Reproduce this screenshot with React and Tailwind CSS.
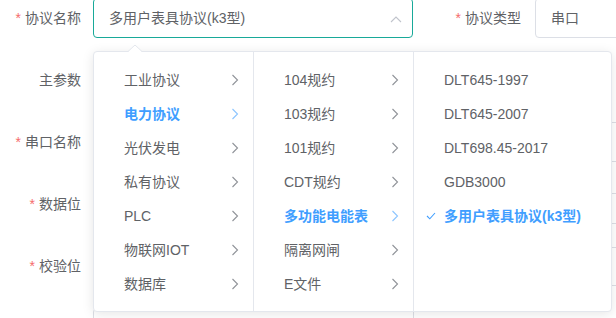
import React from "react";

const Chevron = ({ color = "#909399" }) => (
  <svg width="8" height="12" viewBox="0 0 8 12" className="absolute right-[14px] top-[11px]">
    <polyline points="1.5,1 6.5,6 1.5,11" fill="none" stroke={color} strokeWidth="1.1" />
  </svg>
);

const Item = ({ text, active, arrow = true, check }) => (
  <div
    className={`relative h-[34px] leading-[34px] pl-[30px] pr-[30px] whitespace-nowrap ${
      active ? "text-[#409eff] font-bold" : "text-[#606266]"
    }`}
  >
    {check && (
      <svg width="10" height="8" viewBox="0 0 10 8" className="absolute left-[12px] top-[13px]">
        <polyline points="1,4 3.8,6.8 9,1" fill="none" stroke="#409eff" strokeWidth="1.1" />
      </svg>
    )}
    {text}
    {arrow && <Chevron color={active ? "#8cc5ff" : "#909399"} />}
  </div>
);

const Label = ({ text, req, w = "w-[93px]", pr = "pr-[12px]" }) => (
  <div className={`${w} ${pr} shrink-0 text-right text-[#606266] whitespace-nowrap`}>
    {req && <span className="text-[#f56c6c] mr-[4px]">*</span>}
    {text}
  </div>
);

export default function App() {
  const col1 = ["工业协议", "电力协议", "光伏发电", "私有协议", "PLC", "物联网IOT", "数据库"];
  const col2 = ["104规约", "103规约", "101规约", "CDT规约", "多功能电能表", "隔离网闸", "E文件"];
  const col3 = ["DLT645-1997", "DLT645-2007", "DLT698.45-2017", "GDB3000"];
  return (
    <div
      className="relative w-[616px] h-[318px] overflow-hidden bg-white text-[14px] text-[#606266]"
      style={{ fontFamily: '"Liberation Sans", "Noto Sans CJK SC", sans-serif' }}
    >
      {/* form rows */}
      <div className="flex flex-col">
        <div className="flex items-center h-[40px] -mt-[2px]">
          <Label text="协议名称" req />
          <div className="relative w-[320px] h-[40px] shrink-0 border border-[#18a999] rounded-[4px] flex items-center pl-[15px] text-[#606266]">
            多用户表具协议(k3型)
            <svg width="12" height="7" viewBox="0 0 12 7" className="absolute right-[10px] top-[17px]">
              <polyline points="1,6 6,1 11,6" fill="none" stroke="#c0c4cc" strokeWidth="1.1" />
            </svg>
          </div>
          <Label text="协议类型" req w="w-[122px]" pr="pr-[14px]" />
          <div className="w-[120px] h-[40px] shrink-0 border border-[#dcdfe6] rounded-[4px] flex items-center pl-[15px]">
            串口
          </div>
        </div>
        <div className="flex items-center h-[40px] mt-[22px]">
          <Label text="主参数" />
        </div>
        <div className="flex items-center h-[40px] mt-[22px]">
          <Label text="串口名称" req />
          <div className="w-[320px] shrink-0" />
          <div className="w-[122px] shrink-0" />
          <div className="w-[120px] h-[40px] shrink-0 border border-[#dcdfe6] rounded-[4px]" />
        </div>
        <div className="flex items-start h-[40px] mt-[22px]">
          <div className="h-[40px] flex items-center">
            <Label text="数据位" req />
          </div>
          <div className="w-[320px] shrink-0" />
          <div className="w-[122px] shrink-0" />
          <div className="w-[120px] h-[31px] mt-[9px] shrink-0 border border-[#dcdfe6] rounded-[4px]" />
        </div>
        <div className="flex items-center h-[40px] mt-[22px]">
          <Label text="校验位" req />
          <div className="w-[320px] shrink-0" />
          <div className="w-[122px] shrink-0" />
          <div className="w-[120px] h-[39px] shrink-0 border border-[#dcdfe6] rounded-[4px]" />
        </div>
        <div className="flex mt-[22px]">
          <div className="w-[93px] shrink-0" />
          <div className="w-[321px] h-[60px] shrink-0 border border-[#dcdfe6] rounded-[4px]" />
        </div>
      </div>

      {/* popper arrow */}
      <svg width="14" height="8" viewBox="0 0 14 8" className="absolute left-[128px] top-[44px] z-20">
        <polygon points="0,8 7,1 14,8" fill="white" />
        <polyline points="0,7.5 7,1 14,7.5" fill="none" stroke="#e4e7ed" strokeWidth="1" />
      </svg>

      {/* cascader panel */}
      <div className="absolute left-[93px] top-[51px] w-[519px] h-[261px] z-10 bg-white border border-[#e4e7ed] rounded-[4px] shadow-[0_2px_12px_0_rgba(0,0,0,0.1)] flex">
        <div className="w-[160px] h-full border-r border-[#e4e7ed] pt-[11px] shrink-0">
          {col1.map((t, i) => (
            <Item key={t} text={t} active={i === 1} />
          ))}
        </div>
        <div className="w-[160px] h-full border-r border-[#e4e7ed] pt-[11px] shrink-0">
          {col2.map((t, i) => (
            <Item key={t} text={t} active={i === 4} />
          ))}
        </div>
        <div className="flex-1 h-full pt-[11px]">
          {col3.map((t) => (
            <Item key={t} text={t} arrow={false} />
          ))}
          <Item text="多用户表具协议(k3型)" active arrow={false} check />
        </div>
      </div>
    </div>
  );
}
